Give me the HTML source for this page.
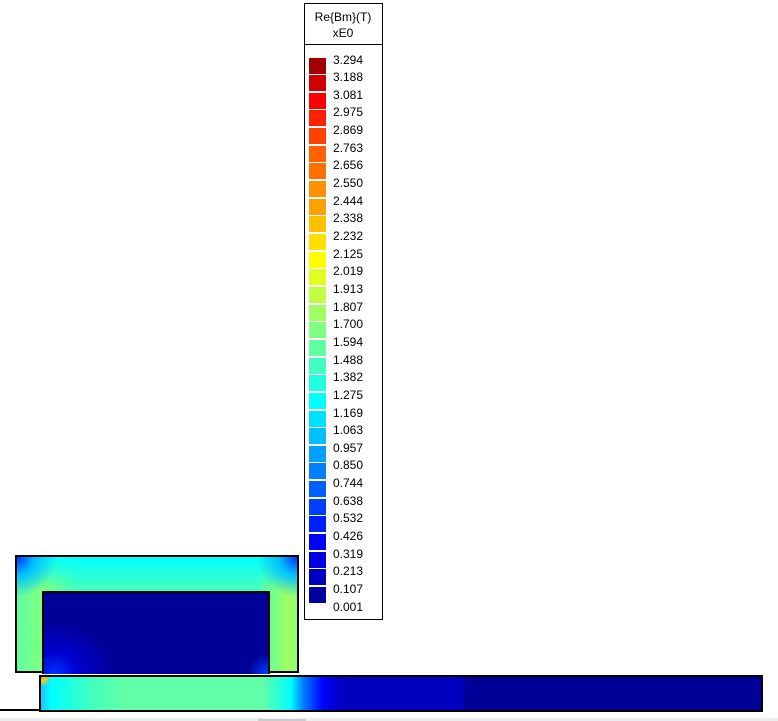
<!DOCTYPE html>
<html><head><style>
body{margin:0;width:778px;height:721px;background:#fff;position:relative;overflow:hidden;font-family:"Liberation Sans",sans-serif}
.a{position:absolute}
.sw{position:absolute;left:309px;width:17px;height:16px}
.lb{position:absolute;left:333px;font-size:12px;line-height:14px;color:#000}
</style></head><body>
<div class="a" style="left:304px;top:3px;width:77px;height:615px;border:1px solid #000"></div>
<div class="a" style="left:304px;top:44px;width:78px;height:1px;background:#000"></div>
<div class="a" style="left:304px;top:9px;width:78px;text-align:center;font-size:12px;line-height:16px">Re{Bm}(T)<br>xE0</div>
<div id="leg"></div>
<script>
var L="3.294 3.188 3.081 2.975 2.869 2.763 2.656 2.550 2.444 2.338 2.232 2.125 2.019 1.913 1.807 1.700 1.594 1.488 1.382 1.275 1.169 1.063 0.957 0.850 0.744 0.638 0.532 0.426 0.319 0.213 0.107 0.001".split(" ");
var C="#a00000 #d00000 #ff0000 #ff2000 #ff4000 #ff6000 #ff7000 #ff9000 #ffa000 #ffc000 #ffe000 #ffff00 #e0ff20 #c0ff40 #a0ff60 #80ff80 #60ffa0 #40ffc0 #20ffe0 #00ffff #00e0ff #00c0ff #00a0ff #0080ff #0060ff #0040ff #0020ff #0000ff #0000e0 #0000c0 #0000a0".split(" ");
var h="";
for(var i=0;i<32;i++){var t=57.5+17.65*i;
if(i<31)h+='<div class="sw" style="top:'+t+'px;background:'+C[i]+'"></div>';
h+='<div class="lb" style="top:'+(t-5)+'px">'+L[i]+'</div>';}
document.getElementById("leg").innerHTML=h;
</script>
<div class="a" style="left:15px;top:555px;width:280px;height:114px;border:2px solid #000;background:
radial-gradient(circle at 0 0,#0030ff 0,#00c0ff 18px,rgba(0,255,255,0) 40px),
radial-gradient(circle at 100% 0,#0030ff 0,#00c0ff 18px,rgba(0,255,255,0) 40px),
linear-gradient(180deg,#00ffff 0,rgba(0,255,255,0) 30px),
linear-gradient(90deg,#60ffa0 0,#80ff80 25px,#40ffc0 60px,#40ffc0 240px,#a0ff60 270px,#90ff70 280px);"></div>
<div class="a" style="left:42px;top:591px;width:224px;height:81px;border:2px solid #000;border-bottom:none;background:
radial-gradient(ellipse 60px 50px at 10px 80px,#0030ff 0,#0000d0 25px,#0000b0 45px,rgba(0,0,153,0) 60px),
radial-gradient(ellipse 20px 20px at 224px 80px,#0040ff 0,rgba(0,0,153,0) 20px),#000099"></div>
<div class="a" style="left:39px;top:675px;width:720px;height:33px;border:2px solid #000;background:
radial-gradient(circle at 0 0,#ff8000 0,#ffd000 4px,rgba(0,255,255,0) 10px),
linear-gradient(90deg,#20c0ff 0,#00ffff 10px,#40ffc0 50px,#60ffa8 80px,#60ffa8 222px,#00ffff 250px,#0080ff 262px,#0000ff 282px,#0000c0 300px,#0000c0 420px,#000099 425px)"></div>
<div class="a" style="left:0;top:709px;width:41px;height:2px;background:#000"></div>
<div class="a" style="left:0;top:718px;width:778px;height:3px;background:#eee"></div>
<div class="a" style="left:258px;top:719px;width:48px;height:2px;background:#ccc"></div>
</body></html>
